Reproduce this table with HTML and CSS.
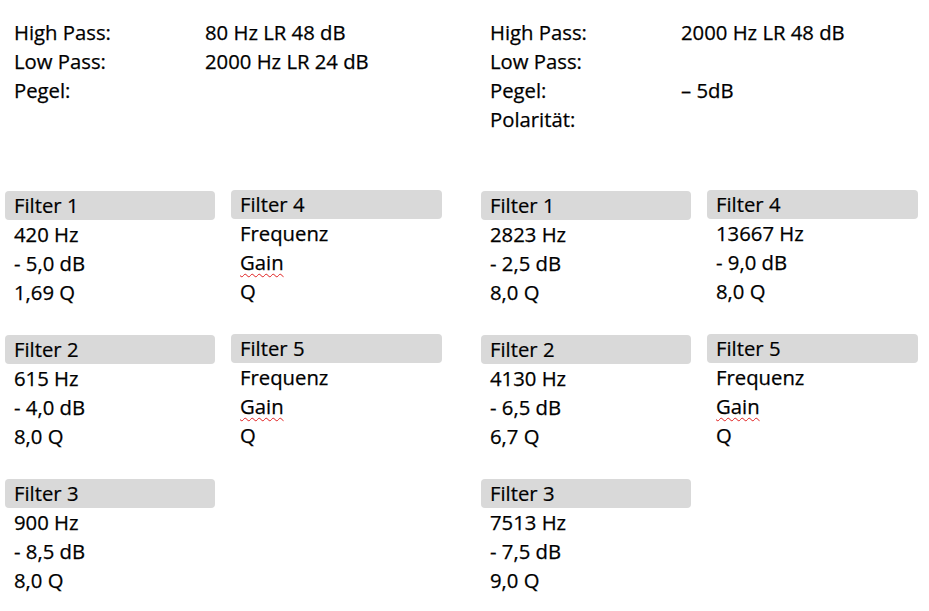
FILE: index.html
```html
<!DOCTYPE html>
<html lang="de">
<head>
<meta charset="utf-8">
<title>Filter</title>
<link rel="stylesheet" href="styles.css">
</head>
<body>
<div class="page">
  <section class="side">
    <div class="head">
      <span>High Pass:</span><span>80 Hz LR 48 dB</span>
      <span>Low Pass:</span><span>2000 Hz LR 24 dB</span>
      <span>Pegel:</span><span></span>
    </div>
    <div class="filters">
      <div class="filter"><div class="title">Filter 1</div><div class="line">420 Hz</div><div class="line">- 5,0 dB</div><div class="line">1,69 Q</div></div>
      <div class="filter up"><div class="title">Filter 4</div><div class="line">Frequenz</div><div class="line"><span class="spell">Gain</span></div><div class="line">Q</div></div>
      <div class="filter"><div class="title">Filter 2</div><div class="line">615 Hz</div><div class="line">- 4,0 dB</div><div class="line">8,0 Q</div></div>
      <div class="filter up"><div class="title">Filter 5</div><div class="line">Frequenz</div><div class="line"><span class="spell">Gain</span></div><div class="line">Q</div></div>
      <div class="filter"><div class="title">Filter 3</div><div class="line">900 Hz</div><div class="line">- 8,5 dB</div><div class="line">8,0 Q</div></div>
    </div>
  </section>
  <section class="side">
    <div class="head">
      <span>High Pass:</span><span>2000 Hz LR 48 dB</span>
      <span>Low Pass:</span><span></span>
      <span>Pegel:</span><span>– 5dB</span>
      <span>Polarität:</span><span></span>
    </div>
    <div class="filters">
      <div class="filter"><div class="title">Filter 1</div><div class="line">2823 Hz</div><div class="line">- 2,5 dB</div><div class="line">8,0 Q</div></div>
      <div class="filter up"><div class="title">Filter 4</div><div class="line">13667 Hz</div><div class="line">- 9,0 dB</div><div class="line">8,0 Q</div></div>
      <div class="filter"><div class="title">Filter 2</div><div class="line">4130 Hz</div><div class="line">- 6,5 dB</div><div class="line">6,7 Q</div></div>
      <div class="filter up"><div class="title">Filter 5</div><div class="line">Frequenz</div><div class="line"><span class="spell">Gain</span></div><div class="line">Q</div></div>
      <div class="filter"><div class="title">Filter 3</div><div class="line">7513 Hz</div><div class="line">- 7,5 dB</div><div class="line">9,0 Q</div></div>
    </div>
  </section>
</div>
</body>
</html>
```

FILE: styles.css
```css
html, body {
  margin: 0;
  padding: 0;
  background: #ffffff;
}
body {
  font-family: "Open Sans", "Liberation Sans", sans-serif;
  font-size: 20.3px;
  color: #000000;
  -webkit-text-stroke: 0.25px #000000;
}
.page {
  display: grid;
  grid-template-columns: 476px 448px;
  padding: 18px 0 0 5px;
}
.head {
  display: grid;
  grid-template-columns: 191px 1fr;
  grid-auto-rows: 29px;
  line-height: 29px;
  padding-left: 9px;
  height: 116px;
}
.filters {
  margin-top: 57px;
  display: grid;
  grid-template-columns: 210px 211px;
  column-gap: 16px;
  row-gap: 28px;
}
.filter {
  line-height: 29px;
}
.filter.up {
  margin-top: -1px;
}
.title {
  height: 29px;
  background: #d9d9d9;
  border-radius: 4px;
  padding-left: 9px;
  -webkit-text-stroke: 0.2px #000000;
}
.line {
  height: 29px;
  padding-left: 9px;
  white-space: nowrap;
}
.spell {
  text-decoration: underline wavy #e02020;
  text-decoration-thickness: 1px;
  text-underline-offset: 3px;
}
```
